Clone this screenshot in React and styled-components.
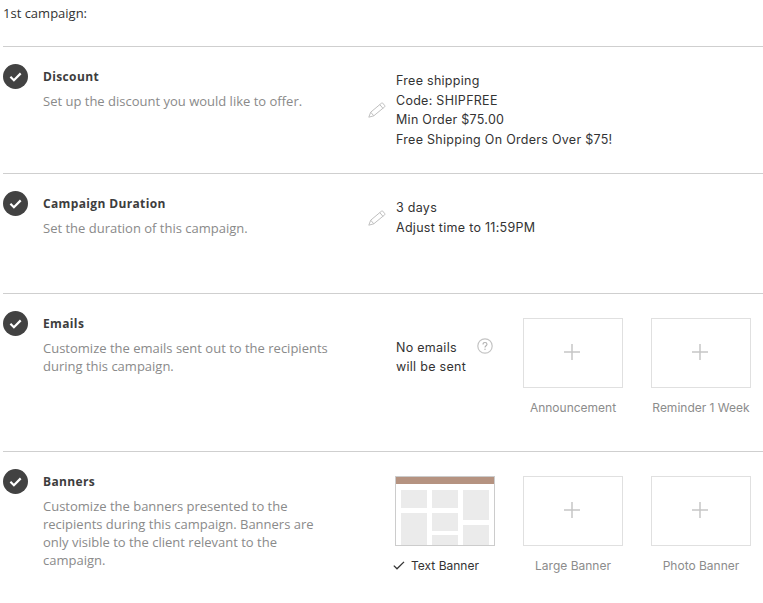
import React from 'react'
import styled, { createGlobalStyle } from 'styled-components'

const GlobalStyle = createGlobalStyle`
  html, body {
    margin: 0;
    padding: 0;
    background: #fff;
    overflow: hidden;
  }
  body {
    font-family: "Open Sans", "Liberation Sans", sans-serif;
  }
`

const CheckBadge = () => (
  <Badge>
    <svg width="25" height="25" viewBox="0 0 25 25">
      <circle cx="12.5" cy="12.5" r="12.5" fill="#424242" />
      <path d="M7.400 12.800l3.500 3.400 6.800-6.800" fill="none" stroke="#fff" strokeWidth="2.200" />
    </svg>
  </Badge>
)

const PencilIcon = () => (
  <Pencil width="18" height="16" viewBox="0 0 18 16">
    <path
      d="M.8 15.200l1.900-5L13.600 1.100c.4-.3.8-.3 1.100 0l2.100 2.600c.3.400.2.800-.1 1.100L5.800 13.800zM2.700 10.200l3.100 3.600M11.800 2.600l3.100 3.700"
      fill="none"
      stroke="#bfbfbf"
      strokeWidth="1"
    />
  </Pencil>
)

const HelpIcon = () => (
  <Help>
    <svg width="16" height="16" viewBox="0 0 16 16">
      <circle cx="8" cy="8" r="7.200" fill="none" stroke="#c4c4c4" strokeWidth="1.200" />
      <path d="M6 6.400c0-1.200.9-1.900 2-1.900s2 .7 2 1.800c0 1.500-2 1.500-2 3.200" fill="none" stroke="#b0b0b0" strokeWidth="1.100" />
      <circle cx="8" cy="11.300" r=".7" fill="#b0b0b0" />
    </svg>
  </Help>
)

const AddTile = ({ label }) => (
  <TileColumn>
    <Tile>
      <svg width="16" height="16" viewBox="0 0 16 16">
        <path d="M8 0v16M0 8h16" stroke="#c6c6c6" strokeWidth="1.500" />
      </svg>
    </Tile>
    <TileLabel>{label}</TileLabel>
  </TileColumn>
)

const BannerPreview = () => (
  <PreviewFrame>
    <svg width="98" height="68" viewBox="0 0 98 68">
      <rect width="98" height="7" fill="#b59381" />
      <g fill="#ebebeb">
        <rect x="5" y="13" width="26" height="18" />
        <rect x="5" y="36" width="26" height="32" />
        <rect x="36" y="13" width="26" height="18" />
        <rect x="36" y="36" width="26" height="18" />
        <rect x="36" y="58" width="26" height="10" />
        <rect x="67" y="13" width="26" height="30" />
        <rect x="67" y="48" width="26" height="20" />
      </g>
    </svg>
  </PreviewFrame>
)

const App = () => {
  return (
    <>
      <GlobalStyle />
      <Page>
        <Heading>1st campaign:</Heading>

        <Row $height={127}>
          <CheckBadge />
          <Intro>
            <Title>Discount</Title>
            <Desc>Set up the discount you would like to offer.</Desc>
          </Intro>
          <Summary>
            <PencilIcon />
            <SummaryText>
              <div>Free shipping</div>
              <div>Code: SHIPFREE</div>
              <div>Min Order $75.00</div>
              <div>Free Shipping On Orders Over $75!</div>
            </SummaryText>
          </Summary>
        </Row>

        <Row $height={120}>
          <CheckBadge />
          <Intro>
            <Title>Campaign Duration</Title>
            <Desc>Set the duration of this campaign.</Desc>
          </Intro>
          <Summary>
            <PencilIcon />
            <SummaryText>
              <div>3 days</div>
              <div>Adjust time to 11:59PM</div>
            </SummaryText>
          </Summary>
        </Row>

        <Row $height={158}>
          <CheckBadge />
          <Intro>
            <Title>Emails</Title>
            <Desc>Customize the emails sent out to the recipients during this campaign.</Desc>
          </Intro>
          <Tiles>
            <EmailNote>
              <NoteText>
                <div>No emails</div>
                <div>will be sent</div>
              </NoteText>
              <HelpIcon />
            </EmailNote>
            <AddTile label="Announcement" />
            <AddTile label="Reminder 1 Week" />
          </Tiles>
        </Row>

        <Row $height={152}>
          <CheckBadge />
          <Intro>
            <Title>Banners</Title>
            <Desc>Customize the banners presented to the recipients during this campaign. Banners are only visible to the client relevant to the campaign.</Desc>
          </Intro>
          <Tiles>
            <TileColumn>
              <BannerPreview />
              <TileLabel $selected>
                <Selected>
                  <TickMark width="12" height="9" viewBox="0 0 12 9">
                    <path d="M.8 4.600l3.200 3.200L11 .9" fill="none" stroke="#333" strokeWidth="1.300" />
                  </TickMark>
                  Text Banner
                </Selected>
              </TileLabel>
            </TileColumn>
            <AddTile label="Large Banner" />
            <AddTile label="Photo Banner" />
          </Tiles>
        </Row>
      </Page>
    </>
  )
}

const Page = styled.div`
width: 763px;
height: 603px;
padding-left: 3px;
box-sizing: border-box;
overflow: hidden;
`

const Heading = styled.div`
height: 46px;
font-size: 13px;
line-height: 27px;
color: #333;
`

const Row = styled.section`
display: grid;
grid-template-columns: 40px 325px 1fr;
min-height: ${(p) => p.$height}px;
box-sizing: border-box;
border-top: 1px solid #cfcfcf;
`

const Badge = styled.div`
padding-top: 17px;
line-height: 0;
`

const Intro = styled.div`
padding-top: 21px;
`

const Title = styled.div`
font-size: 12px;
font-weight: 700;
line-height: 18px;
letter-spacing: 0.36px;
color: #3d3d3d;
`

const Desc = styled.p`
margin: 6px 0 0;
width: 290px;
font-size: 13px;
line-height: 18px;
color: #8a8a8a;
`

const Summary = styled.div`
display: flex;
align-items: center;
align-self: start;
padding-top: 24px;
`

const Pencil = styled.svg`
flex: none;
margin-right: 10px;
`

const SummaryText = styled.div`
font-family: Inter, "Liberation Sans", sans-serif;
font-size: 12.5px;
line-height: 19.6px;
letter-spacing: 0.28px;
color: #333;
`

const Tiles = styled.div`
display: flex;
align-items: flex-start;
gap: 28px;
padding: 24px 0 0 27px;
`

const EmailNote = styled.div`
display: flex;
justify-content: space-between;
width: 97px;
margin: 20px 2px 0 1px;
`

const NoteText = styled(SummaryText)`
line-height: 19px;
`

const Help = styled.div`
line-height: 0;
`

const TileColumn = styled.div`
width: 100px;
display: flex;
flex-direction: column;
align-items: center;
`

const Tile = styled.div`
width: 100px;
height: 70px;
box-sizing: border-box;
border: 1px solid #e0e0e0;
padding: 0 2px 2px 0;
display: flex;
align-items: center;
justify-content: center;
`

const PreviewFrame = styled.div`
width: 100px;
height: 70px;
box-sizing: border-box;
border: 1px solid #cccccc;
line-height: 0;
`

const TileLabel = styled.div`
margin-top: 10px;
font-family: Inter, "Liberation Sans", sans-serif;
font-size: 12px;
line-height: 19px;
white-space: nowrap;
color: ${(p) => (p.$selected ? '#333' : '#8c8c8c')};
`

const Selected = styled.span`
position: relative;
display: inline-block;
`

const TickMark = styled.svg`
position: absolute;
left: -18px;
top: 5px;
`

export default App
